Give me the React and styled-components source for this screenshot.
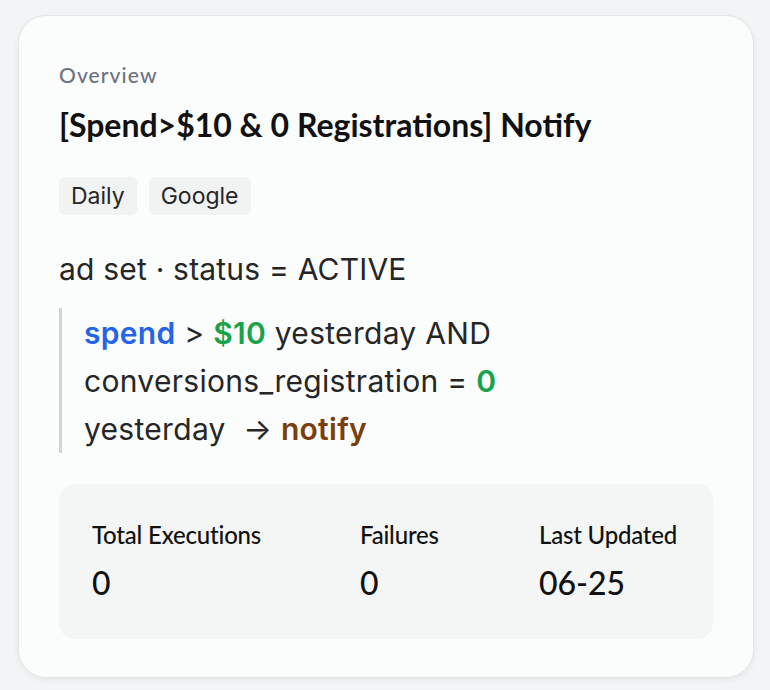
import React from "react";
import styled, { createGlobalStyle } from "styled-components";

const GlobalStyle = createGlobalStyle`
  html, body {
    margin: 0;
    padding: 0;
    background: #f3f4f6;
  }
  body {
    font-family: Inter, "Noto Sans", sans-serif;
  }
`;

const Page = styled.div`
  padding: 15px 16px 12px 18px;
`;

const Card = styled.div`
  box-sizing: border-box;
  width: 736px;
  height: 663px;
  background: #fbfcfc;
  border: 1px solid #e3e4e6;
  border-radius: 28px;
  box-shadow: 0 2px 6px rgba(0, 0, 0, 0.06);
  padding: 46px 40px 38px;
  display: flex;
  flex-direction: column;
`;

const Eyebrow = styled.div`
  font-family: Lato, "Noto Sans", sans-serif;
  font-size: 21px;
  line-height: 26px;
  letter-spacing: 1.1px;
  color: #6b7280;
  font-weight: 500;
`;

const Title = styled.h2`
  margin: 17px 0 0;
  font-family: Lato, "Noto Sans", sans-serif;
  font-size: 32px;
  line-height: 40px;
  font-weight: 700;
  color: #111111;
`;

const Tags = styled.div`
  display: flex;
  gap: 12px;
  margin-top: 32px;
`;

const Tag = styled.span`
  background: #f1f2f2;
  border-radius: 6px;
  padding: 0 12px;
  height: 38px;
  line-height: 38px;
  font-size: 23px;
  color: #262626;
`;

const Scope = styled.div`
  margin-top: 35px;
  font-size: 30px;
  line-height: 38px;
  letter-spacing: 0.2px;
  color: #262626;
`;

const Rule = styled.div`
  margin-top: 20px;
  border-left: 3px solid #d4d4d8;
  padding: 1px 0 0 22px;
  font-size: 30px;
  line-height: 48px;
  letter-spacing: 0.3px;
  color: #262626;
`;

const Token = styled.span`
  font-weight: 600;
  color: ${(p) => p.$color};
`;

const Stats = styled.div`
  margin-top: 31px;
  background: #f4f5f5;
  border-radius: 16px;
  height: 155px;
  box-sizing: border-box;
  padding: 36px 30px 0 33px;
  display: grid;
  grid-template-columns: 268px 179px 1fr;
`;

const Stat = styled.div`
  display: flex;
  flex-direction: column;
  gap: 15px;
  font-family: Lato, "Noto Sans", sans-serif;
  color: #111111;
`;

const Label = styled.div`
  font-size: 24px;
  line-height: 30px;
  font-weight: 500;
  letter-spacing: -0.2px;
`;

const Value = styled.div`
  font-size: 32px;
  line-height: 36px;
  font-weight: 500;
`;

export default function App() {
  return (
    <>
      <GlobalStyle />
      <Page>
        <Card>
          <Eyebrow>Overview</Eyebrow>
          <Title>[Spend&gt;$10 &amp; 0 Registrations] Notify</Title>
          <Tags>
            <Tag>Daily</Tag>
            <Tag>Google</Tag>
          </Tags>
          <Scope>ad set · status = ACTIVE</Scope>
          <Rule>
            <Token $color="#2563eb">spend</Token> &gt;{" "}
            <Token $color="#16a34a">$10</Token> yesterday AND
            <br />
            conversions_registration = <Token $color="#16a34a">0</Token>
            <br />
            yesterday&nbsp; → <Token $color="#78400f">notify</Token>
          </Rule>
          <Stats>
            <Stat>
              <Label>Total Executions</Label>
              <Value>0</Value>
            </Stat>
            <Stat>
              <Label>Failures</Label>
              <Value>0</Value>
            </Stat>
            <Stat>
              <Label>Last Updated</Label>
              <Value>06-25</Value>
            </Stat>
          </Stats>
        </Card>
      </Page>
    </>
  );
}
